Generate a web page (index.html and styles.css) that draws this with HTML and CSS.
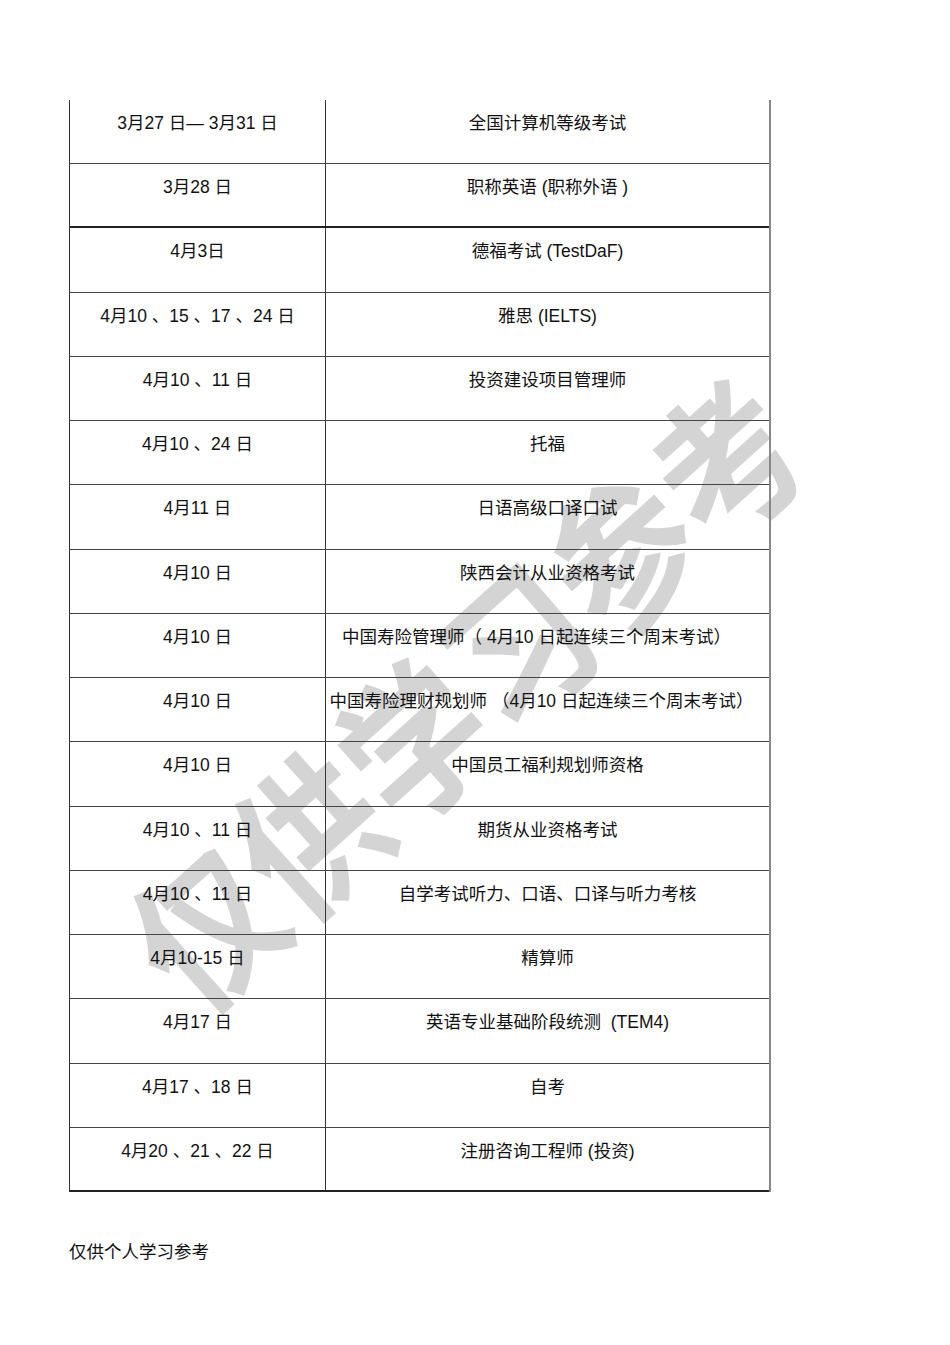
FILE: index.html
```html
<!DOCTYPE html>
<html lang="zh-CN">
<head>
<meta charset="utf-8">
<title>考试时间表</title>
<link rel="stylesheet" href="styles.css">
</head>
<body>
<div class="page">
  <div class="watermark">仅供学习参考</div>
  <div class="table">
    <div class="row"><div class="c1">3月27 日— 3月31 日</div><div class="c2">全国计算机等级考试</div></div>
    <div class="row thick"><div class="c1">3月28 日</div><div class="c2">职称英语 (职称外语 )</div></div>
    <div class="row"><div class="c1">4月3日</div><div class="c2">德福考试 (TestDaF)</div></div>
    <div class="row"><div class="c1">4月10 、15 、17 、24 日</div><div class="c2">雅思 (IELTS)</div></div>
    <div class="row"><div class="c1">4月10 、11 日</div><div class="c2">投资建设项目管理师</div></div>
    <div class="row"><div class="c1">4月10 、24 日</div><div class="c2">托福</div></div>
    <div class="row"><div class="c1">4月11 日</div><div class="c2">日语高级口译口试</div></div>
    <div class="row"><div class="c1">4月10 日</div><div class="c2">陕西会计从业资格考试</div></div>
    <div class="row"><div class="c1">4月10 日</div><div class="c2 shift">中国寿险管理师（ 4月10 日起连续三个周末考试）</div></div>
    <div class="row"><div class="c1">4月10 日</div><div class="c2 wide">中国寿险理财规划师 （4月10 日起连续三个周末考试）</div></div>
    <div class="row"><div class="c1">4月10 日</div><div class="c2">中国员工福利规划师资格</div></div>
    <div class="row"><div class="c1">4月10 、11 日</div><div class="c2">期货从业资格考试</div></div>
    <div class="row"><div class="c1">4月10 、11 日</div><div class="c2">自学考试听力、口语、口译与听力考核</div></div>
    <div class="row"><div class="c1">4月10-15 日</div><div class="c2">精算师</div></div>
    <div class="row"><div class="c1">4月17 日</div><div class="c2">英语专业基础阶段统测&nbsp; (TEM4)</div></div>
    <div class="row"><div class="c1">4月17 、18 日</div><div class="c2">自考</div></div>
    <div class="row thick"><div class="c1">4月20 、21 、22 日</div><div class="c2">注册咨询工程师 (投资)</div></div>
  </div>
  <p class="footer">仅供个人学习参考</p>
</div>
</body>
</html>
```
FILE: styles.css
```css
html, body {
  margin: 0;
  padding: 0;
  background: #fff;
}
body {
  font-family: "Liberation Sans", "Noto Sans CJK SC", sans-serif;
  font-size: 17.5px;
  color: #111;
}
.page {
  position: relative;
  width: 950px;
  height: 1345px;
  padding: 100px 0 0 69px;
  box-sizing: border-box;
}
.watermark {
  position: absolute;
  left: 462px;
  top: 688px;
  transform: translate(-50%, -50%) rotate(-42deg) scaleY(1.15);
  font-family: "Noto Sans CJK SC", sans-serif;
  font-weight: 700;
  font-size: 138px;
  line-height: 1;
  letter-spacing: 2px;
  color: #d4d4d4;
  white-space: nowrap;
  z-index: 0;
}
.table {
  position: relative;
  z-index: 1;
  width: 702px;
  border-left: 1px solid #333;
  border-right: 2px solid #888;
  box-sizing: border-box;
}
.row {
  display: grid;
  grid-template-columns: 256px 1fr;
  height: 64.24px;
  box-sizing: border-box;
  border-bottom: 1px solid #444;
}
.row.thick {
  border-bottom: 2px solid #222;
}
.c1, .c2 {
  padding-top: 13px;
  line-height: 20px;
  text-align: center;
  white-space: nowrap;
}
.c1 {
  border-right: 1px solid #333;
}
.c2 {
  display: flex;
  justify-content: center;
}
.c2.shift {
  padding-right: 22px;
}
.c2.wide {
  padding-right: 12px;
}
.footer {
  margin: 50px 0 0;
  line-height: 20px;
}
```
